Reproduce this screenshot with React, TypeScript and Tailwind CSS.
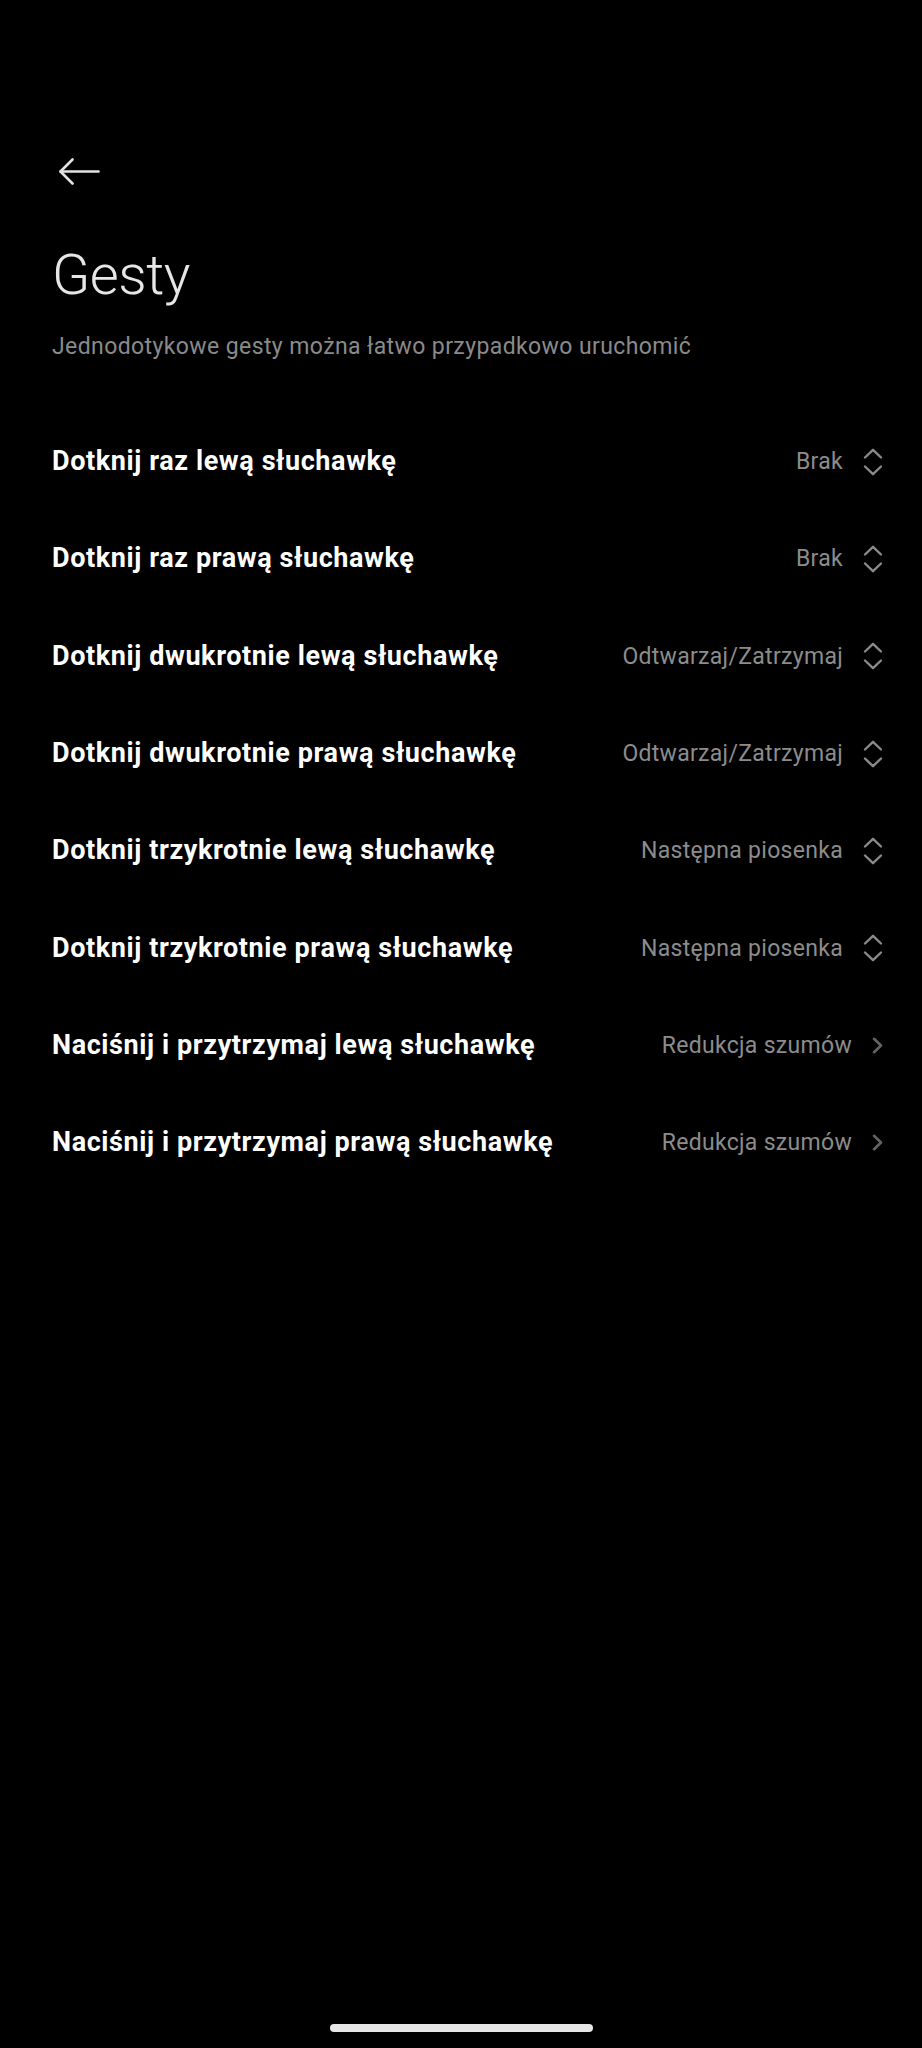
import React from 'react';

type Row = {
  label: string;
  value: string;
  kind: 'select' | 'link';
};

const rows: Row[] = [
  { label: 'Dotknij raz lewą słuchawkę', value: 'Brak', kind: 'select' },
  { label: 'Dotknij raz prawą słuchawkę', value: 'Brak', kind: 'select' },
  { label: 'Dotknij dwukrotnie lewą słuchawkę', value: 'Odtwarzaj/Zatrzymaj', kind: 'select' },
  { label: 'Dotknij dwukrotnie prawą słuchawkę', value: 'Odtwarzaj/Zatrzymaj', kind: 'select' },
  { label: 'Dotknij trzykrotnie lewą słuchawkę', value: 'Następna piosenka', kind: 'select' },
  { label: 'Dotknij trzykrotnie prawą słuchawkę', value: 'Następna piosenka', kind: 'select' },
  { label: 'Naciśnij i przytrzymaj lewą słuchawkę', value: 'Redukcja szumów', kind: 'link' },
  { label: 'Naciśnij i przytrzymaj prawą słuchawkę', value: 'Redukcja szumów', kind: 'link' },
];

const UpDown = () => (
  <svg width="20" height="28" viewBox="0 0 20 28" fill="none" stroke="#8a8a8a" strokeWidth="2.4" strokeLinecap="round" strokeLinejoin="round">
    <path d="M2 9.5 L10 1.8 L18 9.5" />
    <path d="M2 18.5 L10 26.2 L18 18.5" />
  </svg>
);

const ChevronRight = () => (
  <svg width="11" height="17" viewBox="0 0 11 17" fill="none" stroke="#636363" strokeWidth="2.6" strokeLinecap="round" strokeLinejoin="round">
    <path d="M2 1.8 L9 8.5 L2 15.2" />
  </svg>
);

const App = () => {
  return (
    <div
      className="min-h-[2048px] bg-black flex flex-col"
      style={{ fontFamily: 'Roboto, "Noto Sans", "Liberation Sans", sans-serif' }}
    >
      <div className="pl-[52px] pr-[39px]">
        {/* back arrow */}
        <div className="mt-[158px] h-[27px] pl-[7px]">
          <svg width="41" height="27" viewBox="0 0 41 27" fill="none" stroke="#e2e2e2" strokeWidth="2.6" strokeLinecap="round" strokeLinejoin="round">
            <path d="M1.5 13.5 H39.5" />
            <path d="M13.5 1.5 L1.5 13.5 L13.5 25.5" />
          </svg>
        </div>

        <h1 className="mt-[62px] text-[56px] leading-[56px] font-light text-[#e6e6e6] tracking-[-0.5px]">Gesty</h1>
        <p className="mt-[32px] text-[23px] leading-[23px] tracking-[0.4px] text-[#8a8a8a]">
          Jednodotykowe gesty można łatwo przypadkowo uruchomić
        </p>

        <div className="mt-[55px]">
          {rows.map((row, i) => (
            <div key={i} className="h-[97.3px] flex items-center justify-between">
              <span className="text-[27px] leading-[27px] font-bold tracking-[0.6px] text-white">{row.label}</span>
              <div className="flex items-center gap-[20px]">
                <span className="text-[23px] leading-[23px] tracking-[0.3px] text-[#8c8c8c]">{row.value}</span>
                {row.kind === 'select' ? <UpDown /> : <ChevronRight />}
              </div>
            </div>
          ))}
        </div>
      </div>

      {/* gesture bar */}
      <div className="mt-auto mb-[16px] flex justify-center">
        <div className="w-[263px] h-[8px] rounded-full bg-[#e6e6e6]" />
      </div>
    </div>
  );
};

export default App;
